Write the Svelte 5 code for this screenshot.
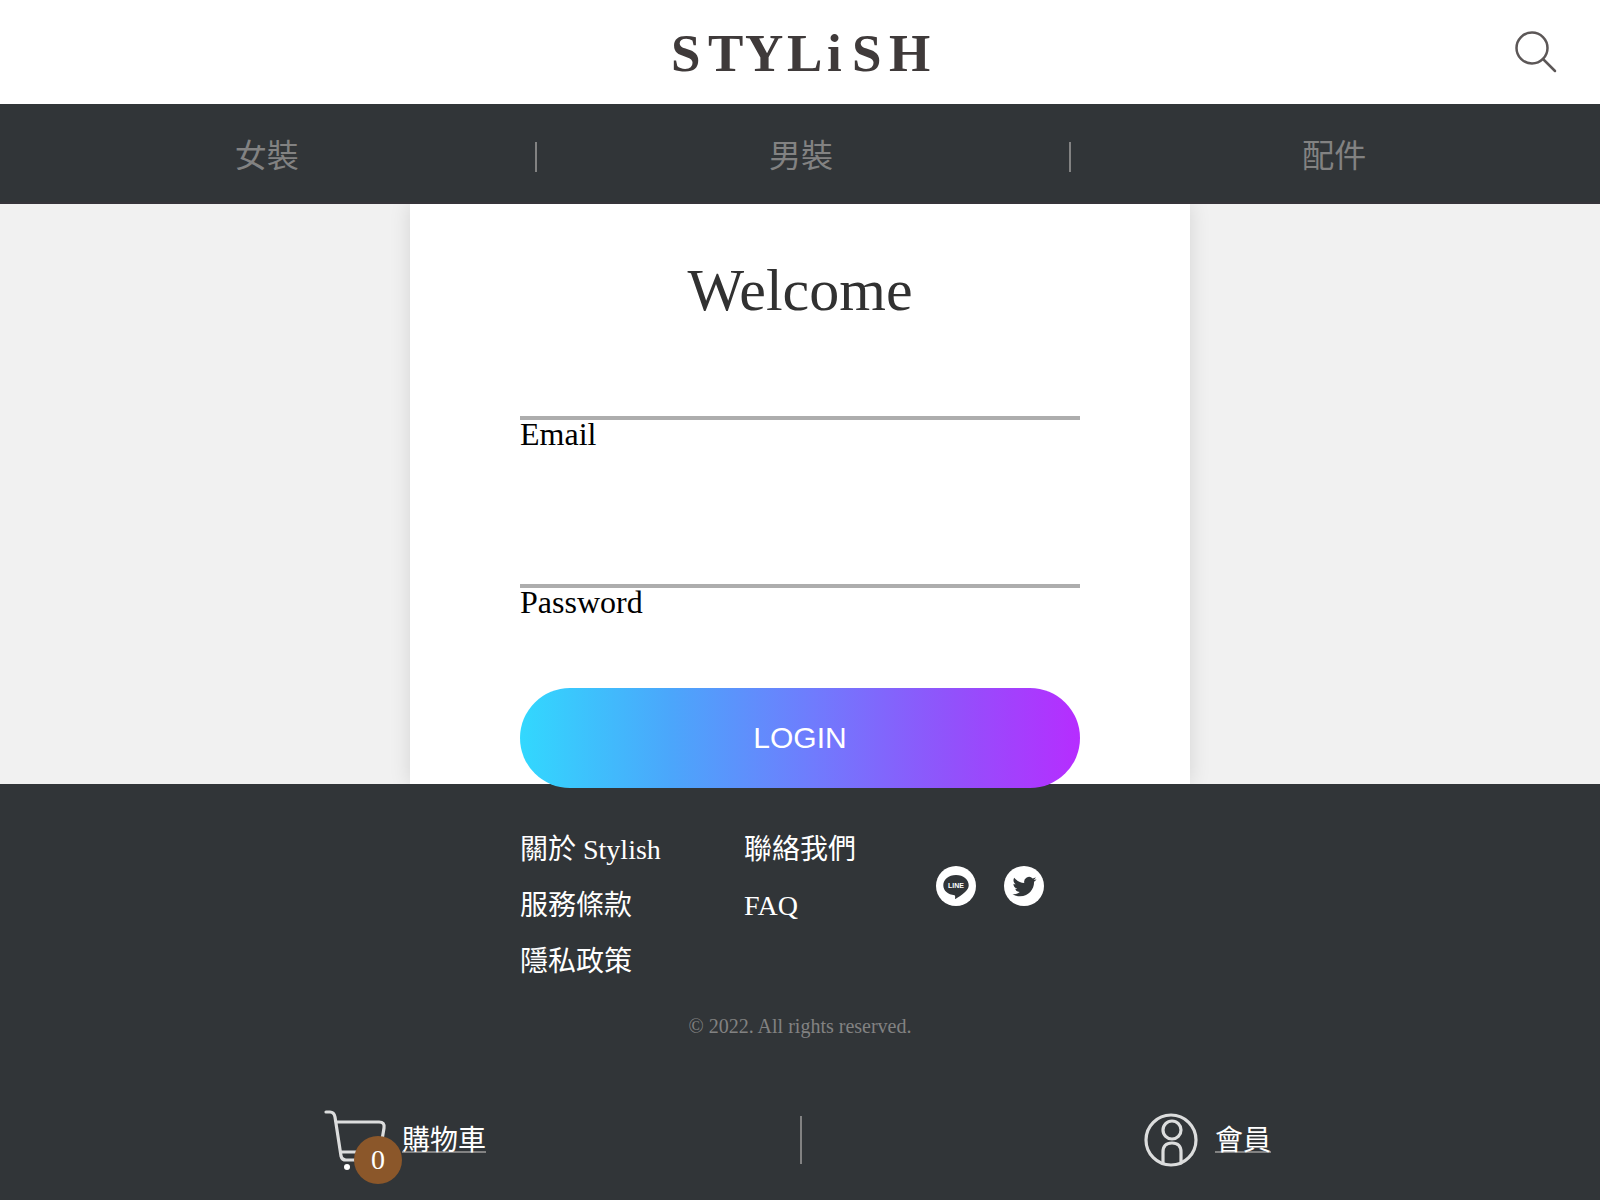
<script>
  const categories = ['女裝', '男裝', '配件'];
  const company = ['關於 Stylish', '服務條款', '隱私政策'];
  const support = ['聯絡我們', 'FAQ'];
  let cartCount = $state(0);
  let email = $state('');
  let password = $state('');
</script>

<div class="page">
  <header class="header">
    <a class="logo" href="#home" aria-label="Stylish">
      <svg width="280" height="80" viewBox="0 0 280 80">
        <text x="11 48 85 127 167 192 229" y="59">STYLiSH</text>
      </svg>
    </a>
    <button class="search" type="button" aria-label="Search">
      <svg width="88" height="88" viewBox="0 0 88 88">
        <circle cx="40" cy="40" r="15.5" />
        <path d="M51 51 L63 63" />
      </svg>
    </button>
  </header>

  <nav class="nav">
    {#each categories as category}
      <a href="#category">{category}</a>
    {/each}
  </nav>

  <main class="main">
    <section class="card">
      <form class="form" onsubmit={(event) => event.preventDefault()}>
        <h1>Welcome</h1>
        <div class="field">
          <input id="email" type="email" bind:value={email} />
          <label for="email">Email</label>
        </div>
        <div class="field">
          <input id="password" type="password" bind:value={password} />
          <label for="password">Password</label>
        </div>
        <button class="login" type="submit">LOGIN</button>
      </form>
    </section>
  </main>

  <footer class="footer">
    <div class="links">
      <ul>
        {#each company as item}<li><a href="#info">{item}</a></li>{/each}
      </ul>
      <ul>
        {#each support as item}<li><a href="#support">{item}</a></li>{/each}
      </ul>
      <div class="social">
        <a href="#line" aria-label="LINE">
          <svg width="40" height="40" viewBox="0 0 40 40">
            <circle cx="20" cy="20" r="20" fill="#fff" />
            <path d="M20 9 C27.3 9 32.7 13.6 32.7 19.2 C32.7 22 31.2 24.2 28.5 26.6 C26 29 22.5 31.5 19.4 33 C18.6 33.2 19.8 30 18.6 29.2 C12 28.5 7.3 24.7 7.3 19.2 C7.3 13.6 12.7 9 20 9 Z" fill="#313538" />
            <text class="line-word" x="20" y="22" text-anchor="middle">LINE</text>
          </svg>
        </a>
        <a href="#twitter" aria-label="Twitter">
          <svg width="40" height="40" viewBox="0 0 40 40">
            <circle cx="20" cy="20" r="20" fill="#fff" />
            <path transform="translate(8.5 8.6)" fill="#313538" d="M23.953 4.57a10 10 0 01-2.825.775 4.958 4.958 0 002.163-2.723c-.951.555-2.005.959-3.127 1.184a4.92 4.92 0 00-8.384 4.482C7.69 8.095 4.067 6.13 1.64 3.162a4.822 4.822 0 00-.666 2.475c0 1.71.87 3.213 2.188 4.096a4.904 4.904 0 01-2.228-.616v.06a4.923 4.923 0 003.946 4.827 4.996 4.996 0 01-2.212.085 4.936 4.936 0 004.604 3.417 9.867 9.867 0 01-6.102 2.105c-.39 0-.779-.023-1.17-.067a13.995 13.995 0 007.557 2.209c9.053 0 13.998-7.496 13.998-13.985 0-.21 0-.42-.015-.63A9.935 9.935 0 0024 4.59z" />
          </svg>
        </a>
      </div>
    </div>
    <p class="copyright">© 2022. All rights reserved.</p>

    <div class="toolbar">
      <a class="tool" href="#cart">
        <span class="icon">
          <svg width="88" height="88" viewBox="0 0 88 88">
            <path d="M12 16 H16 Q20 16 21 21 L27 60 Q28 64 32 64 H63 M22 26 H65 Q71 26 70 32 L66 56 H27" />
            <circle class="wheel" cx="33" cy="71" r="3" />
            <circle class="wheel" cx="60" cy="71" r="3" />
          </svg>
          <span class="badge">{cartCount}</span>
        </span>
        <span class="text">購物車</span>
      </a>
      <a class="tool" href="#member">
        <span class="icon">
          <svg width="88" height="88" viewBox="0 0 88 88">
            <circle cx="44" cy="44" r="25" />
            <circle cx="45" cy="34" r="9" />
            <path d="M36 67 V56 Q36 47 45 47 Q54 47 54 56 V67" />
          </svg>
        </span>
        <span class="text">會員</span>
      </a>
    </div>
  </footer>
</div>

<style>
  :global(body) {
    margin: 0;
    background: #f1f1f1;
  }

  .page {
    font-family: 'Liberation Serif', 'Noto Sans CJK TC', serif;
    color: #000;
  }

  svg {
    display: block;
  }

  a {
    color: inherit;
    text-decoration: none;
  }

  .header {
    display: grid;
    grid-template-columns: 1fr auto 1fr;
    align-items: center;
    height: 104px;
    padding: 0 20px;
    box-sizing: border-box;
    background: #fff;
  }

  .logo {
    grid-column: 2;
  }

  .logo text {
    font-family: 'Liberation Serif', serif;
    font-size: 53px;
    font-weight: 700;
    fill: #3f3a3a;
  }

  .search {
    justify-self: end;
    padding: 0;
    border: 0;
    background: none;
    cursor: pointer;
  }

  .search svg {
    fill: none;
    stroke: #5c5757;
    stroke-width: 2.5;
    stroke-linecap: round;
  }

  .nav {
    position: relative;
    z-index: 1;
    display: grid;
    grid-template-columns: repeat(3, 1fr);
    align-items: center;
    height: 100px;
    box-sizing: border-box;
    border-bottom: 2px solid #36343a;
    background: #313538;
    color: #828282;
    font-size: 32px;
    text-align: center;
  }

  .nav a {
    margin: 8px 2px 0;
    height: 30px;
    line-height: 28px;
  }

  .nav a + a {
    border-left: 2px solid #828282;
  }

  .main {
    display: flex;
    justify-content: center;
    background: #f1f1f1;
  }

  .card {
    width: 780px;
    max-width: 100%;
    box-sizing: border-box;
    padding: 50px 24px 0;
    background: #fff;
    box-shadow: 0 0 20px rgba(0, 0, 0, 0.12);
  }

  .form {
    display: flex;
    flex-direction: column;
    max-width: 560px;
    margin: 0 auto;
  }

  h1 {
    margin: 0 0 44px;
    color: #313131;
    font-size: 60px;
    font-weight: 400;
    line-height: 72px;
    text-align: center;
  }

  .field {
    display: flex;
    flex-direction: column;
  }

  .field + .field {
    margin-top: 90px;
  }

  .field input {
    height: 50px;
    box-sizing: border-box;
    padding: 0;
    border: 0;
    border-bottom: 4px solid #adadad;
    border-radius: 0;
    outline: 0;
    background: none;
    font: inherit;
    font-size: 32px;
  }

  .field label {
    font-size: 32px;
    line-height: 28px;
  }

  /* The button hangs slightly over the footer. */
  .login {
    position: relative;
    z-index: 2;
    height: 100px;
    margin: 72px 0 -4px;
    padding: 0;
    border: 0;
    border-radius: 50px;
    background: linear-gradient(90deg, #32d8fe, #4ba6fb 27%, #6f7cfd 52%, #9350fb 78%, #b62dff);
    color: #fff;
    font-family: 'Liberation Sans', sans-serif;
    font-size: 30px;
    cursor: pointer;
  }

  .footer {
    position: relative;
    z-index: 1;
    padding-top: 38px;
    background: #313538;
    color: #fff;
    font-size: 28px;
  }

  .links {
    display: grid;
    grid-template-columns: 224px 192px auto;
    justify-content: start;
    max-width: 560px;
    margin: 0 auto;
    line-height: 56px;
  }

  ul {
    margin: 0;
    padding: 0;
    list-style: none;
  }

  li {
    height: 56px;
  }

  .social {
    display: flex;
    gap: 28px;
    padding-top: 44px;
  }

  .line-word {
    font-family: 'Liberation Sans', sans-serif;
    font-size: 7px;
    font-weight: 700;
    fill: #fff;
  }

  .copyright {
    margin: 24px 0 42px;
    color: #828282;
    font-size: 20px;
    line-height: 24px;
    text-align: center;
  }

  .toolbar {
    display: grid;
    grid-template-columns: 1fr 1fr;
    align-items: center;
    height: 120px;
  }

  .tool {
    display: flex;
    align-items: center;
    justify-content: center;
    height: 48px;
    line-height: 40px;
  }

  .tool + .tool {
    padding-right: 4px;
    border-left: 2px solid #828282;
  }

  .icon {
    position: relative;
  }

  .icon svg {
    fill: none;
    stroke: #dcdddd;
    stroke-width: 3.2;
    stroke-linecap: round;
  }

  .icon .wheel {
    fill: #fff;
    stroke: none;
  }

  .badge {
    position: absolute;
    right: 0;
    bottom: 0;
    width: 48px;
    height: 48px;
    border-radius: 50%;
    background: #8b572a;
    line-height: 48px;
    text-align: center;
  }

  .text {
    padding-top: 2px;
    text-decoration: underline 2px #828282;
  }
</style>
